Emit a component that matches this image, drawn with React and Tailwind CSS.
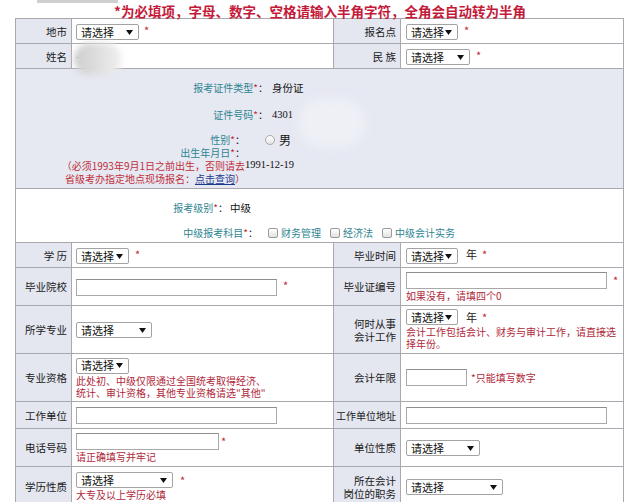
import React from "react";

const RED = "text-[#b0283a]";

function Arrow() {
  return (
    <svg width="7" height="5" viewBox="0 0 7 5" className="shrink-0">
      <polygon points="0,0 7,0 3.5,5" fill="#111" />
    </svg>
  );
}

function Sel({ className }) {
  return (
    <span
      className={`inline-flex h-[16px] items-center justify-between rounded-[2px] border border-[#a3a3a3] bg-white pl-[4px] pr-[5px] align-middle text-[11px] leading-none text-[#111] ${className}`}
    >
      <span>请选择</span>
      <Arrow />
    </span>
  );
}

function Box({ className }) {
  return (
    <span
      className={`inline-block h-[17px] border border-[#a9a9a9] border-t-[#8e8e8e] bg-white align-middle ${className}`}
    />
  );
}

function Star({ className = "ml-[5px]" }) {
  return <span className={`text-[11px] text-[#c0283a] ${className}`}>*</span>;
}

function Note({ children, className = "" }) {
  return (
    <div className={`whitespace-nowrap text-[10px] leading-[12px] ${RED} ${className}`}>
      {children}
    </div>
  );
}

const label =
  "whitespace-nowrap border border-[#a8a8ae] bg-[#e4e6f0] pr-[4px] text-right align-middle text-[10.5px] leading-[13px] text-[#1a1a1a]";
const value =
  "border border-[#a8a8ae] bg-white pl-[4px] align-middle text-[10.5px] text-[#1a1a1a]";

function Check({ children }) {
  return (
    <span className="mr-[9px] inline-flex items-center">
      <span className="mr-[3px] inline-block h-[10px] w-[10px] rounded-[2px] border border-[#9a9a9a] bg-gradient-to-b from-white to-[#e2e2e2]" />
      <span className="text-[#2e8592]">{children}</span>
    </span>
  );
}

const App = () => {
  return (
    <div className="relative h-[502px] w-[640px] overflow-hidden bg-white font-['Noto_Sans_CJK_SC','Noto_Sans',sans-serif]">
      <div className="absolute left-[37px] top-0 h-[3px] w-[81px] bg-[#cfcfcf]" />

      <div className="flex h-[18px] justify-center pt-[4px]">
        <span className="whitespace-nowrap text-[13.5px] font-bold leading-[14px] text-[#c41a3a]">
          *为必填项，字母、数字、空格请输入半角字符，全角会自动转为半角
        </span>
      </div>

      <table className="ml-[15px] w-[608px] table-fixed border-collapse">
        <colgroup>
          <col className="w-[56px]" />
          <col className="w-[262px]" />
          <col className="w-[67px]" />
          <col className="w-[223px]" />
        </colgroup>
        <tbody>
          <tr>
            <td className={`${label} h-[25px]`}>地市</td>
            <td className={value}>
              <Sel className="w-[63px]" />
              <Star />
            </td>
            <td className={label}>报名点</td>
            <td className={`${value} pl-[5px]`}>
              <Sel className="w-[52px]" />
              <Star className="ml-[6px]" />
            </td>
          </tr>
          <tr>
            <td className={`${label} h-[25px]`}>姓名</td>
            <td className={value}>
              <span className="text-[#555]">-</span>
            </td>
            <td className={label}>民&nbsp;族</td>
            <td className={`${value} pl-[5px]`}>
              <Sel className="w-[64px]" />
              <Star className="ml-[6px]" />
            </td>
          </tr>

          <tr>
            <td
              colSpan={4}
              className="h-[120px] border border-[#a8a8ae] bg-[#e6e8f2] p-0 align-top text-[10px]"
            >
              <div className="pt-[12px]">
                <div className="flex leading-[14px]">
                  <div className="w-[252px] text-right text-[#2e8592]">
                    报考证件类型<span className="text-[#c0283a]">*</span>
                    <span className="text-[#222]">：</span>
                  </div>
                  <div className="ml-[4px] text-[10.5px] text-[#111]">身份证</div>
                </div>
                <div className="mt-[13px] flex leading-[14px]">
                  <div className="w-[252px] text-right text-[#2e8592]">
                    证件号码<span className="text-[#c0283a]">*</span>
                    <span className="text-[#222]">：</span>
                  </div>
                  <div className="ml-[4px] font-['Liberation_Serif',serif] text-[10.5px] text-[#111]">
                    4301
                  </div>
                </div>
                <div className="mt-[11px] flex items-center leading-[13px]">
                  <div className="w-[229px] text-right text-[#2e8592]">
                    性别<span className="text-[#c0283a]">*</span>
                    <span className="text-[#222]">：</span>
                  </div>
                  <span className="ml-[20px] inline-block h-[10px] w-[10px] rounded-full border border-[#a8a8a8] bg-gradient-to-b from-white to-[#e4e4e4]" />
                  <span className="ml-[4px] text-[12px] text-[#111]">男</span>
                </div>
                <div className="flex items-center leading-[13px]">
                  <div className="w-[229px] text-right">
                    <div className="text-[#2e8592]">
                      出生年月日<span className="text-[#c0283a]">*</span>
                      <span className="text-[#222]">：</span>
                    </div>
                    <div className="whitespace-nowrap text-[#c0303a]">
                      （必须1993年9月1日之前出生，否则请去
                    </div>
                    <div className="whitespace-nowrap text-[#c0303a]">
                      省级考办指定地点现场报名：
                      <span className="text-[#1c3a8c] underline">点击查询</span>）
                    </div>
                  </div>
                  <div className="-mt-[3px] font-['Liberation_Serif',serif] text-[10.5px] text-[#111]">
                    1991-12-19
                  </div>
                </div>
              </div>
            </td>
          </tr>

          <tr>
            <td
              colSpan={4}
              className="h-[54px] border border-[#a8a8ae] bg-white p-0 align-top text-[10px]"
            >
              <div className="pt-[12px]">
                <div className="flex leading-[14px]">
                  <div className="w-[212px] text-right text-[#2e8592]">
                    报考级别<span className="text-[#c0283a]">*</span>
                    <span className="text-[#222]">：</span>
                  </div>
                  <div className="ml-[2px] text-[10.5px] text-[#111]">中级</div>
                </div>
                <div className="mt-[11px] flex items-center leading-[14px]">
                  <div className="w-[242px] text-right text-[#2e8592]">
                    中级报考科目<span className="text-[#c0283a]">*</span>
                    <span className="text-[#222]">：</span>
                  </div>
                  <div className="ml-[10px] flex items-center">
                    <Check>财务管理</Check>
                    <Check>经济法</Check>
                    <Check>中级会计实务</Check>
                  </div>
                </div>
              </div>
            </td>
          </tr>

          <tr>
            <td className={`${label} h-[25px]`}>学&nbsp;历</td>
            <td className={value}>
              <Sel className="w-[53px]" />
              <Star className="ml-[6px]" />
            </td>
            <td className={label}>毕业时间</td>
            <td className={`${value} pl-[5px]`}>
              <Sel className="w-[52px]" />
              <span className="ml-[8px] text-[11px]">年</span>
              <Star className="ml-[5px]" />
            </td>
          </tr>

          <tr>
            <td className={`${label} h-[38px]`}>毕业院校</td>
            <td className={value}>
              <Box className="w-[201px]" />
              <Star className="ml-[6px]" />
            </td>
            <td className={label}>毕业证编号</td>
            <td className={`${value} pl-[5px]`}>
              <div className="flex items-center">
                <Box className="w-[201px]" />
                <Star className="ml-[6px]" />
              </div>
              <Note className="mt-[1px]">如果没有，请填四个0</Note>
            </td>
          </tr>

          <tr>
            <td className={`${label} h-[48px]`}>所学专业</td>
            <td className={value}>
              <Sel className="w-[76px]" />
            </td>
            <td className={label}>
              何时从事
              <br />
              会计工作
            </td>
            <td className={`${value} pl-[5px]`}>
              <div className="flex items-center">
                <Sel className="w-[52px]" />
                <span className="ml-[8px] text-[11px]">年</span>
                <Star className="ml-[5px]" />
              </div>
              <Note className="mt-[1px]">
                会计工作包括会计、财务与审计工作，请直接选
                <br />
                择年份。
              </Note>
            </td>
          </tr>

          <tr>
            <td className={`${label} h-[48px]`}>专业资格</td>
            <td className={value}>
              <Sel className="w-[53px]" />
              <Note className="mt-[1px]">
                此处初、中级仅限通过全国统考取得经济、
                <br />
                统计、审计资格，其他专业资格请选"其他"
              </Note>
            </td>
            <td className={label}>会计年限</td>
            <td className={`${value} pl-[5px]`}>
              <Box className="w-[61px]" />
              <span className={`ml-[4px] align-middle text-[10px] ${RED}`}>
                *只能填写数字
              </span>
            </td>
          </tr>

          <tr>
            <td className={`${label} h-[27px]`}>工作单位</td>
            <td className={value}>
              <Box className="w-[201px]" />
            </td>
            <td className={`${label} pr-[3px] text-[10px]`}>工作单位地址</td>
            <td className={`${value} pl-[5px]`}>
              <Box className="w-[201px]" />
            </td>
          </tr>

          <tr>
            <td className={`${label} h-[38px]`}>电话号码</td>
            <td className={value}>
              <div className="flex items-center">
                <Box className="w-[143px]" />
                <Star className="ml-[2px]" />
              </div>
              <Note className="mt-[1px]">请正确填写并牢记</Note>
            </td>
            <td className={label}>单位性质</td>
            <td className={`${value} pl-[5px]`}>
              <Sel className="w-[74px]" />
            </td>
          </tr>

          <tr>
            <td className={`${label} h-[40px]`}>学历性质</td>
            <td className={value}>
              <div className="flex items-center">
                <Sel className="w-[97px]" />
                <Star className="ml-[7px]" />
              </div>
              <Note className="mt-[1px]">大专及以上学历必填</Note>
            </td>
            <td className={label}>
              所在会计
              <br />
              岗位的职务
            </td>
            <td className={`${value} pl-[5px]`}>
              <Sel className="w-[97px]" />
            </td>
          </tr>
        </tbody>
      </table>

      <div className="absolute left-[74px] top-[43px] h-[32px] w-[48px] rounded-full bg-gradient-to-r from-[#cdcdcd] to-[#f0f0f0] blur-[3px]" />
      <div className="absolute left-[298px] top-[98px] h-[50px] w-[68px] rounded-full bg-[#eef0f6] blur-[6px]" />
    </div>
  );
};

export default App;
